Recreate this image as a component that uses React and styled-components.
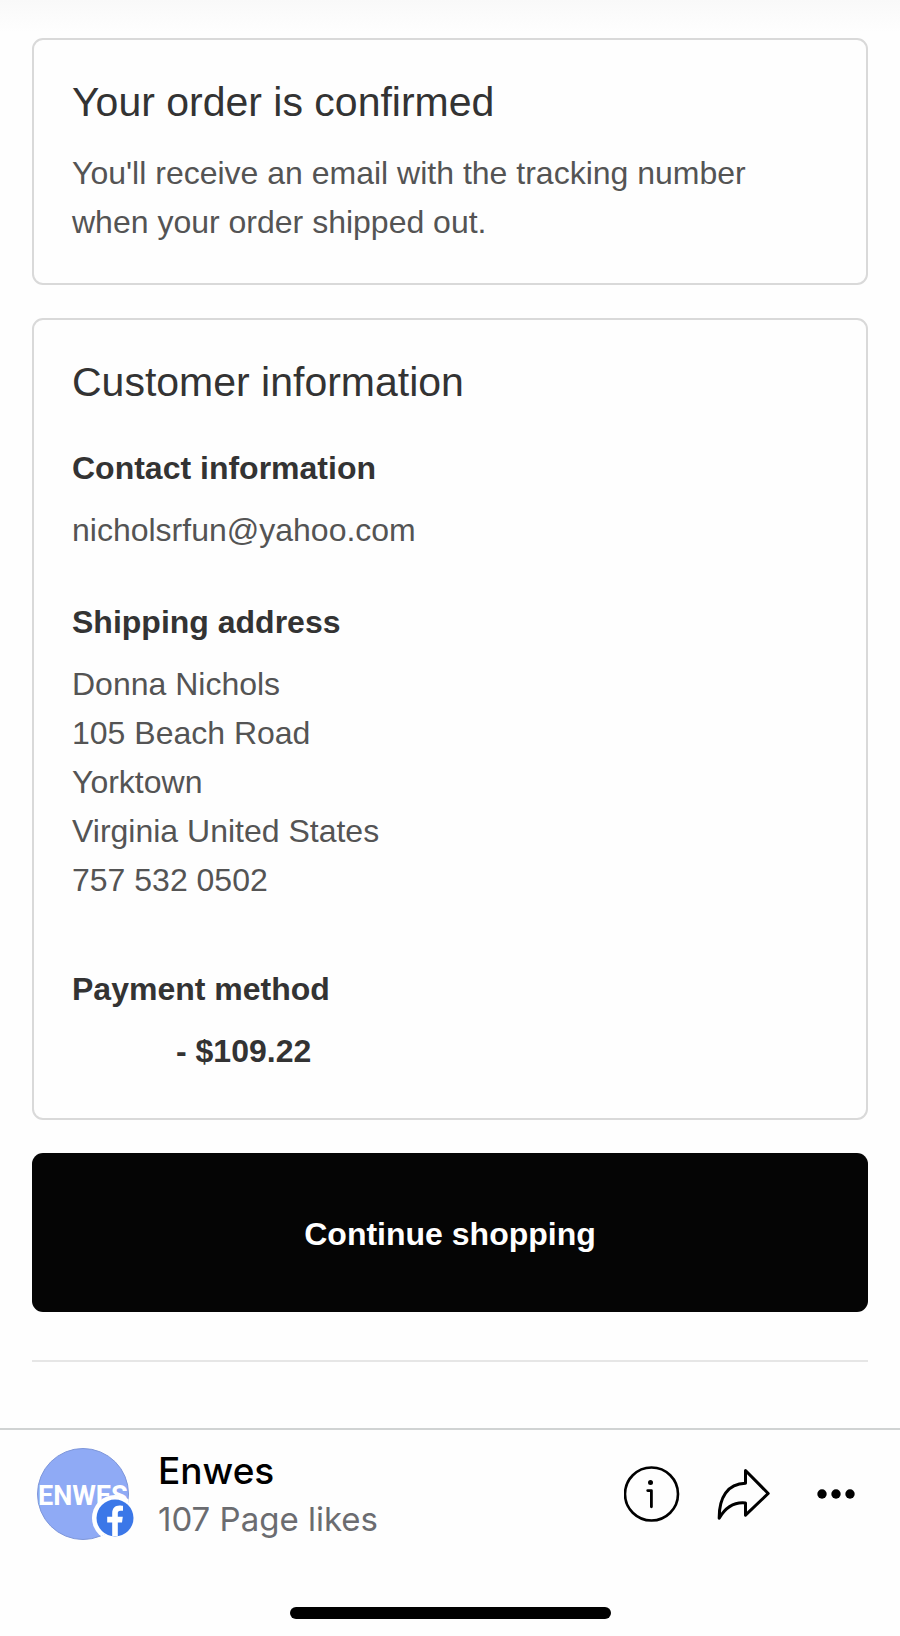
import styled, { createGlobalStyle } from "styled-components";

const address = [
  "Donna Nichols",
  "105 Beach Road",
  "Yorktown",
  "Virginia United States",
  "757 532 0502",
];

function App() {
  return (
    <>
      <GlobalStyle />
      <Page>
        <HeaderShadow />
        <Main>
          <Card>
            <Title>Your order is confirmed</Title>
            <Message>
              You'll receive an email with the tracking number when your order shipped out.
            </Message>
          </Card>

          <Card>
            <Title>Customer information</Title>
            <Section $top={37}>
              <SubTitle>Contact information</SubTitle>
              <Text>nicholsrfun@yahoo.com</Text>
            </Section>
            <Section $top={43}>
              <SubTitle>Shipping address</SubTitle>
              <Address>
                {address.map((line) => (
                  <Text key={line}>{line}</Text>
                ))}
              </Address>
            </Section>
            <Section $top={60}>
              <SubTitle>Payment method</SubTitle>
              <Payment>- $109.22</Payment>
            </Section>
          </Card>

          <ContinueButton type="button">Continue shopping</ContinueButton>
          <Divider />
        </Main>

        <Footer>
          <PageBar>
            <Profile href="#">
              <Avatar />
              <ProfileText>
                <PageName>Enwes</PageName>
                <Likes>107 Page likes</Likes>
              </ProfileText>
            </Profile>
            <Actions>
              <IconButton type="button" aria-label="Page information">
                <InfoIcon />
              </IconButton>
              <IconButton type="button" aria-label="Share">
                <ShareIcon />
              </IconButton>
              <IconButton type="button" aria-label="More">
                <MoreIcon />
              </IconButton>
            </Actions>
          </PageBar>
          <HomeIndicator />
        </Footer>
      </Page>
    </>
  );
}

function Avatar() {
  return (
    <svg width="102" height="94" viewBox="0 0 102 94" aria-hidden="true">
      <defs>
        <clipPath id="avatar-clip">
          <circle cx="47" cy="47" r="46" />
        </clipPath>
      </defs>
      <circle cx="47" cy="47" r="45.5" fill="#8faaf5" stroke="#7f97da" />
      <g clipPath="url(#avatar-clip)">
        <AvatarText x="2" y="58">ENWES</AvatarText>
        <circle cx="79" cy="71" r="23" fill="#fff" />
      </g>
      <circle cx="79" cy="71" r="18.5" fill="#3b77e8" />
      <path
        d="M76.2 89.3V75.4h-5v-5.6h5v-3.6c0-5 2.9-7.7 7.4-7.7 1.5 0 3.4.3 3.4.3v4.9h-2.5c-2.1 0-2.7 1.2-2.7 2.6v3.5h5l-.8 5.6h-4.2v13.9z"
        fill="#fff"
      />
    </svg>
  );
}

function InfoIcon() {
  return (
    <svg width="56" height="56" viewBox="0 0 56 56" fill="none" stroke="#000">
      <circle cx="27.5" cy="28" r="26.5" strokeWidth="2.6" />
      <circle cx="26.5" cy="16.6" r="2.5" fill="#000" stroke="none" />
      <path d="M23.7 24.6h3.7v16.2" strokeWidth="2.8" strokeLinecap="round" strokeLinejoin="round" />
    </svg>
  );
}

function ShareIcon() {
  return (
    <svg width="56" height="56" viewBox="0 0 56 56" fill="none" stroke="#000">
      <path
        d="M29.5 4.5 52.2 27.5 29.5 49.2V37C18 35.8 9.5 41.5 3.2 52.2 3 31.5 11.5 17.6 29.5 17.3z"
        strokeWidth="3"
        strokeLinejoin="round"
      />
    </svg>
  );
}

function MoreIcon() {
  return (
    <svg width="56" height="56" viewBox="0 0 56 56">
      <circle cx="14" cy="28" r="4.7" />
      <circle cx="28" cy="28" r="4.7" />
      <circle cx="42" cy="28" r="4.7" />
    </svg>
  );
}

const GlobalStyle = createGlobalStyle`
  * {
    box-sizing: border-box;
  }
  body {
    margin: 0;
    background: #fefefe;
    color: #545454;
    font-family: "Liberation Sans", Arial, sans-serif;
    font-size: 32px;
    line-height: 49px;
  }
  h1, h2, p, address {
    margin: 0;
    font-style: normal;
  }
`;
const Page = styled.div`
  display: flex;
  flex-direction: column;
  min-height: 100vh;
`;
const HeaderShadow = styled.div`
  height: 38px;
  background: linear-gradient(#f9f9f9, #fefefe 85%);
`;
const Main = styled.main`
  display: flex;
  flex-direction: column;
  gap: 33px;
  padding: 0 32px 66px;
`;
const Card = styled.section`
  padding: 37px 38px 36px;
  border: 2px solid #d9d9d9;
  border-radius: 11px;
  background: #fefefe;

  & + & {
    padding-bottom: 42px;
  }
`;
const Title = styled.h1`
  color: #333333;
  font-size: 41px;
  font-weight: 400;
  line-height: 50px;
`;
const Message = styled.p`
  margin-top: 22px;
`;
const Section = styled.div`
  display: flex;
  flex-direction: column;
  gap: 13px;
  margin-top: ${(props) => props.$top}px;
`;
const SubTitle = styled.h2`
  color: #333333;
  font-size: 32px;
  font-weight: 700;
`;
const Text = styled.p``;
const Address = styled.address``;
const Payment = styled.p`
  padding-left: 104px;
  color: #333333;
  font-weight: 700;
`;
const ContinueButton = styled.button`
  padding: 57px 24px 53px;
  border: none;
  border-radius: 11px;
  background: #050505;
  color: #ffffff;
  font: inherit;
  font-weight: 700;
  cursor: pointer;
`;
const Divider = styled.hr`
  width: 100%;
  height: 2px;
  margin: 15px 0 0;
  border: none;
  background: #e6e6e6;
`;
const Footer = styled.footer`
  display: flex;
  flex-direction: column;
  flex: 1;
  justify-content: space-between;
  padding-bottom: 17px;
  border-top: 2px solid #d0d3d3;
  font-family: Inter, Roboto, sans-serif;
`;
const PageBar = styled.div`
  display: flex;
  align-items: center;
  justify-content: space-between;
  padding: 13px 36px 0;
`;
const Profile = styled.a`
  display: flex;
  align-items: center;
  gap: 20px;
  color: #000000;
  text-decoration: none;
`;
const AvatarText = styled.text`
  fill: #ffffff;
  font-family: Roboto, sans-serif;
  font-size: 27px;
  font-weight: 700;
`;
const ProfileText = styled.div`
  display: flex;
  flex-direction: column;
  padding-top: 3px;
`;
const PageName = styled.span`
  font-size: 37px;
  font-weight: 500;
`;
const Likes = styled.span`
  color: #6b6c70;
  font-size: 33px;
`;
const Actions = styled.div`
  display: flex;
  align-items: center;
  gap: 36px;
`;
const IconButton = styled.button`
  display: flex;
  padding: 0;
  border: none;
  background: none;
  cursor: pointer;
`;
const HomeIndicator = styled.div`
  align-self: center;
  width: 321px;
  height: 12px;
  border-radius: 6px;
  background: #000000;
`;

export default App;
